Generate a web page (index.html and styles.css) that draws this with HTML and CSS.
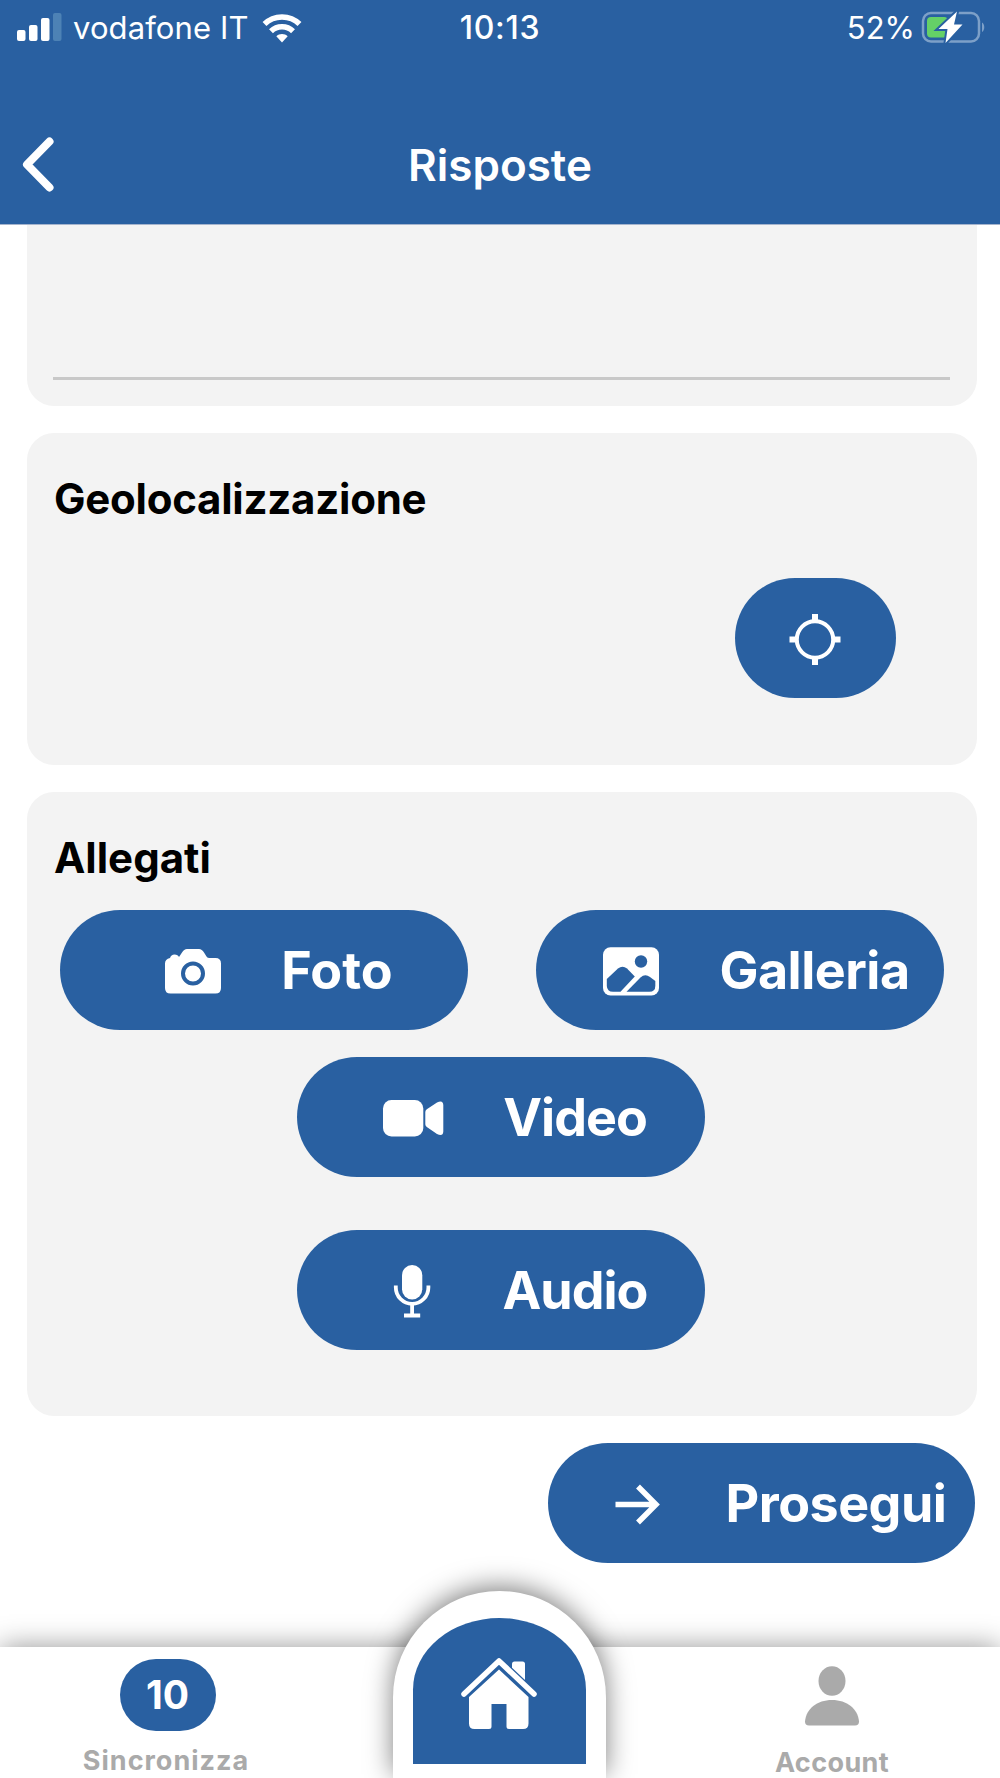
FILE: index.html
```html
<!DOCTYPE html>
<html lang="it">
    <head>
        <meta charset="utf-8">
        <title>Risposte</title>
        <link rel="stylesheet" href="styles.css">
    </head>
    <body>
        <header>
            <div class="status-bar">
                <div class="carrier">
                    <svg class="signal" width="46" height="30" viewBox="0 0 46 30">
                        <rect x="1" y="19" width="8.5" height="11" rx="2"/>
                        <rect x="13" y="14" width="8.5" height="16" rx="2"/>
                        <rect x="25" y="7" width="8.5" height="23" rx="2"/>
                        <rect class="off" x="37" y="2" width="8.5" height="28" rx="2"/>
                    </svg>
                    <span class="operator">vodafone IT</span>
                    <svg class="wifi" width="40" height="30" viewBox="0 0 40 30">
                        <path class="line" d="M2.5 11C12 1.5 28 1.5 37.5 11M9 18.3C15 12.2 25 12.2 31 18.3"/>
                        <path d="M20 29.5l-5.7-6.2c3-3.2 8.400-3.200 11.400 0z"/>
                    </svg>
                </div>
                <span class="time">10:13</span>
                <div class="power">
                    <span class="percent">52%</span>
                    <svg width="66" height="34" viewBox="0 0 66 34">
                        <rect class="shell" x="3" y="3" width="56" height="28.500" rx="8"/>
                        <path class="shell-tip" d="M62 12.500c3 1.500 3 8 0 9.500z"/>
                        <rect class="charge" x="7" y="7" width="21" height="20.500" rx="4"/>
                        <path class="bolt" d="M37 1.500L18.500 19h9L25.500 33 42.500 14.500h-8.500z"/>
                    </svg>
                </div>
            </div>
            <div class="nav">
                <button class="back">
                    <svg width="40" height="64" viewBox="0 0 40 64">
                        <path d="M30.500 8.500L8 31.500l22.500 23"/>
                    </svg>
                </button>
                <h1>Risposte</h1>
            </div>
        </header>

        <main>
            <section class="card answer">
                <div class="field"></div>
            </section>

            <section class="card location">
                <h2>Geolocalizzazione</h2>
                <button class="pill locate">
                    <svg class="icon" viewBox="0 0 64 64">
                        <circle class="stroke" cx="31" cy="33.500" r="18.200" stroke-width="4"/>
                        <path class="stroke" d="M31 8v7M31 52v7M5.500 33.500h7M49.500 33.500h7" stroke-width="6"/>
                    </svg>
                </button>
            </section>

            <section class="card attachments">
                <h2>Allegati</h2>
                <div class="row">
                    <button class="pill">
                        <svg class="icon" viewBox="0 0 64 64">
                            <path d="M9 20q1-3.500 4.500-3.500t4.500 2.500l3-4.500q2-3.500 5-3.500h12q3 0 5 3.500l2.500 4q1 1.500 3 1.500h6q5.500 0 5.500 5.500v24.500q0 5.500-5.500 5.500h-45q-5.500 0-5.500-5.500v-24.500q0-4.500 5-5.500z"/>
                            <circle class="ring" cx="32" cy="35.500" r="10"/>
                        </svg>
                        <span>Foto</span>
                    </button>
                    <button class="pill wide">
                        <svg class="icon" viewBox="0 0 64 64">
                            <rect x="4" y="9.300" width="56" height="48.200" rx="7.500"/>
                            <circle class="cut" cx="42" cy="23.500" r="6.200"/>
                            <path class="cut" d="M7.800 41L19 30.500q4.500-3.700 9 0l7.800 8L21.500 53.800H14q-6 0-6.200-6z"/>
                            <path class="cut" d="M27.500 53.800L41.500 39.500q4.500-4.200 9.500-.5l5.300 4v5q0 5.800-6 5.800z"/>
                        </svg>
                        <span>Galleria</span>
                    </button>
                </div>
                <div class="row single">
                    <button class="pill tight">
                        <svg class="icon" viewBox="0 0 64 64">
                            <rect x="2" y="15" width="40.300" height="36.500" rx="8.500"/>
                            <path d="M44.300 27q0-1.500 1.500-2.800L56 17.500q6-3 6.300 2.500v26.500q-.3 5.500-6.300 2.500L45.800 42q-1.500-1-1.500-2.800z"/>
                        </svg>
                        <span>Video</span>
                    </button>
                </div>
                <div class="row single last">
                    <button class="pill tight">
                        <svg class="icon" viewBox="0 0 64 64">
                            <rect x="22" y="7" width="20.300" height="34.500" rx="10.150"/>
                            <path class="stroke" d="M15.800 27.500v2a16.300 16.300 0 0 0 32.600 0v-2M32.100 46v10M24 57.500h16.200" stroke-width="3.800"/>
                        </svg>
                        <span>Audio</span>
                    </button>
                </div>
            </section>

            <button class="pill wide next">
                <svg class="icon" viewBox="0 0 64 64">
                    <path class="stroke" d="M10.500 33.500H50M33 15.500l18 18-18 18" stroke-width="5.500"/>
                </svg>
                <span>Prosegui</span>
            </button>
        </main>

        <footer>
            <div class="tab sync">
                <span class="badge">10</span>
                <span class="tab-label">Sincronizza</span>
            </div>
            <div class="home">
                <div class="home-button">
                    <svg width="76" height="72" viewBox="0 0 76 72">
                        <path d="M51 14V6q0-2.500 2.500-2.500h8q2.500 0 2.500 2.500v20z"/>
                        <path class="roof-gap" d="M3 36L38 3l35 33"/>
                        <path class="roof" d="M3 36L38 3l35 33"/>
                        <path d="M38 11.500L67.500 39v26.500q0 5.500-5.500 5.500H48q-2.500 0-2.500-2.500V46h-15v22.500q0 2.500-2.500 2.500H13.500Q8 71 8 65.500V39z"/>
                    </svg>
                </div>
            </div>
            <div class="tab account">
                <svg width="56" height="60" viewBox="0 0 56 60">
                    <ellipse cx="28" cy="15" rx="13.500" ry="14.800"/>
                    <path d="M5 59.500q-4 0-4-4C2 43 13 34 28 34s26 9 27 21.500q0 4-4 4z"/>
                </svg>
                <span class="tab-label">Account</span>
            </div>
        </footer>
    </body>
</html>
```
FILE: styles.css
```css
* {
    box-sizing: border-box;
}
body {
    margin: 0;
    width: 1000px;
    height: 1778px;
    overflow: hidden;
    display: flex;
    flex-direction: column;
    font-family: Inter, "Liberation Sans", sans-serif;
    background-color: #fff;
    color: #000;
}
button {
    border: none;
    padding: 0;
    font-family: inherit;
    color: inherit;
    background: none;
}
svg {
    display: block;
    flex: none;
    fill: #fff;
}
h1, h2 {
    margin: 0;
}

/* Header */
header {
    height: 225px;
    display: flex;
    flex-direction: column;
    justify-content: space-between;
    background-color: #2960a1;
    border-bottom: 1px solid #a5b4cd;
    color: #fff;
}
.status-bar {
    height: 55px;
    display: grid;
    grid-template-columns: 1fr auto 1fr;
    align-items: center;
    font-size: 31px;
    line-height: 55px;
}
.carrier {
    display: flex;
    align-items: center;
    padding-left: 16px;
}
.operator {
    width: 177px;
    margin-left: 11px;
    letter-spacing: 0.1px;
    white-space: nowrap;
}
.signal {
    margin-bottom: 3px;
}
.signal .off {
    fill: #4d82b5;
}
.wifi {
    margin-left: 12px;
}
.wifi .line {
    fill: none;
    stroke: #fff;
    stroke-width: 5.5;
}
.time {
    font-size: 32px;
    font-weight: 550;
    letter-spacing: 0.7px;
}
.power {
    display: flex;
    align-items: center;
    justify-content: flex-end;
    padding-right: 14px;
}
.percent {
    margin-right: 5px;
}
.power svg {
    margin-bottom: 2px;
}
.shell {
    fill: none;
    stroke: #7da0c8;
    stroke-width: 2.5;
}
.shell-tip {
    fill: #7da0c8;
}
.charge {
    fill: #65d067;
}
.bolt {
    stroke: #2960a1;
    stroke-width: 4;
    paint-order: stroke;
}
.nav {
    height: 118px;
    display: grid;
    grid-template-columns: 1fr auto 1fr;
    align-items: center;
}
.back {
    justify-self: start;
    padding-left: 19px;
}
.back path {
    fill: none;
    stroke: #fff;
    stroke-width: 8;
    stroke-linecap: round;
    stroke-linejoin: round;
}
h1 {
    font-size: 44px;
    font-weight: 600;
}

/* Form */
main {
    flex: 1;
    display: flex;
    flex-direction: column;
    gap: 27px;
    padding: 0 23px 0 27px;
}
.card {
    border-radius: 27px;
    background-color: #f3f3f3;
    display: flex;
    flex-direction: column;
}
.card h2 {
    padding: 41px 27px 0;
    font-size: 42px;
    line-height: 50px;
}
.location h2 {
    letter-spacing: -0.25px;
}
.answer {
    height: 181px;
    border-top-left-radius: 0;
    border-top-right-radius: 0;
    padding: 0 27px 0 26px;
}
.field {
    height: 155px;
    border-bottom: 3px solid #c8c8c8;
}
.location {
    height: 332px;
}
.attachments {
    height: 624px;
}
.row {
    display: flex;
    justify-content: space-between;
    margin-top: 27px;
    padding: 0 33px;
}
.row.single {
    justify-content: center;
    padding-right: 35px;
}
.row.last {
    margin-top: 53px;
}
.pill {
    width: 408px;
    height: 120px;
    border-radius: 60px;
    display: flex;
    align-items: center;
    justify-content: center;
    gap: 31px;
    background-color: #2960a1;
    color: #fff;
    font-size: 52px;
    font-weight: 700;
}
.pill.wide {
    padding-left: 3px;
    letter-spacing: -0.5px;
}
.pill.tight {
    gap: 33px;
    letter-spacing: -1px;
}
.icon {
    width: 64px;
    height: 64px;
    margin: 0 25.5px;
}
.icon .stroke {
    fill: none;
    stroke: #fff;
}
.icon .ring {
    fill: none;
    stroke: #2960a1;
    stroke-width: 4;
}
.icon .cut {
    fill: #2960a1;
}
.pill.locate {
    width: 161px;
    align-self: flex-end;
    margin: 54px 81px 0 0;
}
.pill.next {
    width: 427px;
    align-self: flex-end;
    margin-right: 2px;
}

/* Tab bar */
footer {
    height: 131px;
    display: flex;
    justify-content: space-between;
    align-items: flex-end;
    background-color: #fff;
    box-shadow: 0 0 27px rgba(0, 0, 0, .42);
}
.tab {
    width: 336px;
    height: 131px;
    display: flex;
    flex-direction: column;
    align-items: center;
}
.tab-label {
    font-size: 27px;
    font-weight: 650;
    line-height: 32px;
    letter-spacing: 0.4px;
    color: #aaa;
}
.sync {
    width: 335px;
    padding-top: 12px;
}
.sync .tab-label {
    margin-right: 3px;
    letter-spacing: 1px;
}
.badge {
    width: 96px;
    height: 72px;
    margin-bottom: 14px;
    border-radius: 36px;
    background-color: #2960a1;
    color: #fff;
    font-size: 39px;
    font-weight: 700;
    line-height: 72px;
    text-align: center;
}
.home {
    width: 213px;
    height: 187px;
    padding: 27px 20px 14px;
    border-radius: 106.5px 106.5px 0 0;
    background-color: #fff;
    box-shadow: 0 -4px 27px rgba(0, 0, 0, .5);
}
.home-button {
    height: 146px;
    display: flex;
    justify-content: center;
    padding-top: 40px;
    padding-right: 2px;
    border-radius: 87px 87px 0 0 / 72px 72px 0 0;
    background-color: #2960a1;
}
.roof {
    fill: none;
    stroke: #fff;
    stroke-width: 5.5;
    stroke-linecap: round;
    stroke-linejoin: round;
}
.roof-gap {
    fill: none;
    stroke: #2960a1;
    stroke-width: 8;
}
.account {
    padding-top: 19px;
}
.account svg {
    margin-bottom: 21px;
    fill: #aaa;
}
```
